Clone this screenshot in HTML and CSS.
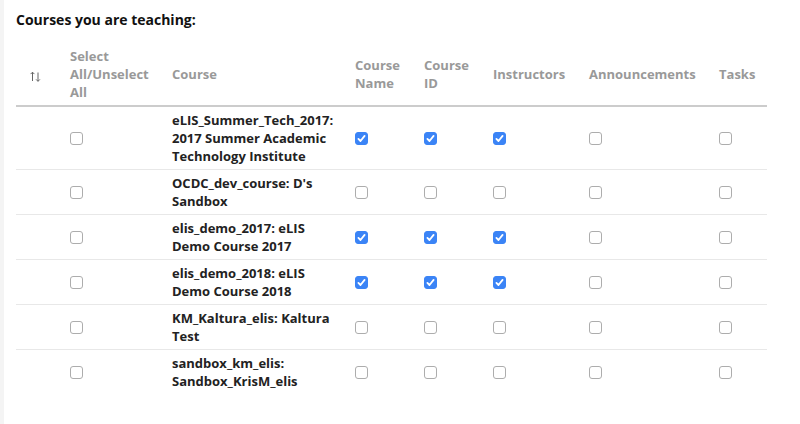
FILE: index.html
```html
<!DOCTYPE html>
<html lang="en">
<head>
<meta charset="utf-8">
<title>Courses you are teaching</title>
<link rel="stylesheet" href="styles.css">
</head>
<body>
<main class="panel">
  <h2 class="title">Courses you are teaching:</h2>
  <table class="courses">
    <colgroup>
      <col class="c-sort"><col class="c-sel"><col class="c-course"><col class="c-name"><col class="c-id"><col class="c-inst"><col class="c-ann"><col class="c-tasks">
    </colgroup>
    <thead>
      <tr>
        <th class="sort"><svg width="11" height="11" viewBox="0 0 11 11" aria-hidden="true"><path d="M2.5 10V1.2M0.6 3.1L2.5 1.2L4.4 3.1" fill="none" stroke="#666" stroke-width="1"/><path d="M8 1.5V10.3M6.1 8.4L8 10.3L9.9 8.4" fill="none" stroke="#666" stroke-width="1"/></svg></th>
        <th>Select All/Unselect All</th>
        <th>Course</th>
        <th>Course Name</th>
        <th>Course ID</th>
        <th>Instructors</th>
        <th>Announcements</th>
        <th>Tasks</th>
      </tr>
    </thead>
    <tbody>
      <tr>
        <td></td>
        <td><span class="cb"></span></td>
        <td class="name">eLIS_Summer_Tech_2017: 2017 Summer Academic Technology Institute</td>
        <td><span class="cb on"><svg viewBox="0 0 13 13"><path d="M3.4 6.9L5.5 9L9.6 3.9"/></svg></span></td>
        <td><span class="cb on"><svg viewBox="0 0 13 13"><path d="M3.4 6.9L5.5 9L9.6 3.9"/></svg></span></td>
        <td><span class="cb on"><svg viewBox="0 0 13 13"><path d="M3.4 6.9L5.5 9L9.6 3.9"/></svg></span></td>
        <td><span class="cb"></span></td>
        <td><span class="cb"></span></td>
      </tr>
      <tr>
        <td></td>
        <td><span class="cb"></span></td>
        <td class="name">OCDC_dev_course: D's Sandbox</td>
        <td><span class="cb"></span></td>
        <td><span class="cb"></span></td>
        <td><span class="cb"></span></td>
        <td><span class="cb"></span></td>
        <td><span class="cb"></span></td>
      </tr>
      <tr>
        <td></td>
        <td><span class="cb"></span></td>
        <td class="name">elis_demo_2017: eLIS Demo Course 2017</td>
        <td><span class="cb on"><svg viewBox="0 0 13 13"><path d="M3.4 6.9L5.5 9L9.6 3.9"/></svg></span></td>
        <td><span class="cb on"><svg viewBox="0 0 13 13"><path d="M3.4 6.9L5.5 9L9.6 3.9"/></svg></span></td>
        <td><span class="cb on"><svg viewBox="0 0 13 13"><path d="M3.4 6.9L5.5 9L9.6 3.9"/></svg></span></td>
        <td><span class="cb"></span></td>
        <td><span class="cb"></span></td>
      </tr>
      <tr>
        <td></td>
        <td><span class="cb"></span></td>
        <td class="name">elis_demo_2018: eLIS Demo Course 2018</td>
        <td><span class="cb on"><svg viewBox="0 0 13 13"><path d="M3.4 6.9L5.5 9L9.6 3.9"/></svg></span></td>
        <td><span class="cb on"><svg viewBox="0 0 13 13"><path d="M3.4 6.9L5.5 9L9.6 3.9"/></svg></span></td>
        <td><span class="cb on"><svg viewBox="0 0 13 13"><path d="M3.4 6.9L5.5 9L9.6 3.9"/></svg></span></td>
        <td><span class="cb"></span></td>
        <td><span class="cb"></span></td>
      </tr>
      <tr>
        <td></td>
        <td><span class="cb"></span></td>
        <td class="name">KM_Kaltura_elis: Kaltura Test</td>
        <td><span class="cb"></span></td>
        <td><span class="cb"></span></td>
        <td><span class="cb"></span></td>
        <td><span class="cb"></span></td>
        <td><span class="cb"></span></td>
      </tr>
      <tr>
        <td></td>
        <td><span class="cb"></span></td>
        <td class="name">sandbox_km_elis: Sandbox_KrisM_elis</td>
        <td><span class="cb"></span></td>
        <td><span class="cb"></span></td>
        <td><span class="cb"></span></td>
        <td><span class="cb"></span></td>
        <td><span class="cb"></span></td>
      </tr>
    </tbody>
  </table>
</main>
</body>
</html>
```
FILE: styles.css
```css
html, body {
  margin: 0;
  padding: 0;
  height: 100%;
}
body {
  background: #f4f4f4;
  font-family: "Open Sans", "Liberation Sans", sans-serif;
  color: #222;
}
.panel {
  margin-left: 4px;
  min-height: 100%;
  background: #fff;
  padding: 11px 0 0 12px;
  box-sizing: border-box;
}
.title {
  margin: 0 0 14px;
  font-size: 14px;
  line-height: 18px;
  font-weight: 700;
  color: #111;
}
.courses {
  width: 751px;
  table-layout: fixed;
  border-collapse: collapse;
  font-size: 13px;
  line-height: 18px;
  font-weight: 700;
}
.c-sort { width: 42px; }
.c-sel { width: 102px; }
.c-course { width: 183px; }
.c-name { width: 69px; }
.c-id { width: 69px; }
.c-inst { width: 96px; }
.c-ann { width: 130px; }
.c-tasks { width: 60px; }

.courses th {
  text-align: left;
  vertical-align: middle;
  padding: 4px 10px 4px 12px;
  color: #999;
  font-weight: 700;
  border-bottom: 2px solid #cccccc;
}
.courses th.sort {
  padding: 4px 0 0 14px;
}
.courses th.sort svg {
  display: block;
}
.courses td {
  vertical-align: middle;
  padding: 4px 10px 4px 12px;
  border-bottom: 1px solid #e8e8e8;
  color: #222;
}
.courses td.name {
  padding-right: 7px;
}
.courses tbody tr:last-child td {
  border-bottom: none;
}
.cb {
  display: block;
  width: 13px;
  height: 13px;
  box-sizing: border-box;
  border: 1px solid #adadad;
  border-radius: 3px;
  background: #fff;
}
.cb.on {
  border-color: #3b84f6;
  background: #3b84f6;
  position: relative;
}
.cb.on svg {
  position: absolute;
  left: -1px;
  top: -1px;
  width: 13px;
  height: 13px;
  fill: none;
  stroke: #fff;
  stroke-width: 1.8;
  stroke-linecap: round;
  stroke-linejoin: round;
}
```
